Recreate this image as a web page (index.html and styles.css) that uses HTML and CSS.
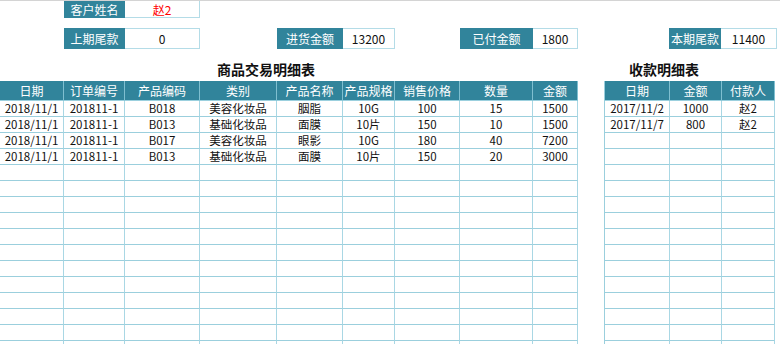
FILE: index.html
```html
<!DOCTYPE html>
<html lang="zh">
<head>
<meta charset="utf-8">
<title>商品交易明细</title>
<link rel="stylesheet" href="styles.css">
</head>
<body>
<div class="sheet">
  <div class="fields fields-1">
    <div class="sp w64"></div>
    <div class="lbl w61">客户姓名</div>
    <div class="val w75 red">赵2</div>
  </div>
  <div class="fields fields-2">
    <div class="sp w64"></div>
    <div class="lbl w61">上期尾款</div>
    <div class="val w75">0</div>
    <div class="sp w77"></div>
    <div class="lbl w66">进货金额</div>
    <div class="val w52">13200</div>
    <div class="sp w65"></div>
    <div class="lbl w73">已付金额</div>
    <div class="val w45">1800</div>
    <div class="sp w91"></div>
    <div class="lbl w52">本期尾款</div>
    <div class="val w56">11400</div>
  </div>
  <div class="tables">
    <section class="block block-main">
      <h2 class="title title-main">商品交易明细表</h2>
      <table class="grid grid-main">
        <colgroup>
          <col style="width:64px"><col style="width:61px"><col style="width:75px"><col style="width:77px"><col style="width:66px"><col style="width:52px"><col style="width:65px"><col style="width:73px"><col style="width:45px">
        </colgroup>
        <thead>
          <tr><th>日期</th><th>订单编号</th><th>产品编码</th><th>类别</th><th>产品名称</th><th>产品规格</th><th>销售价格</th><th>数量</th><th>金额</th></tr>
        </thead>
        <tbody>
          <tr><td>2018/11/1</td><td>201811-1</td><td>B018</td><td>美容化妆品</td><td>胭脂</td><td>10G</td><td>100</td><td>15</td><td>1500</td></tr>
          <tr><td>2018/11/1</td><td>201811-1</td><td>B013</td><td>基础化妆品</td><td>面膜</td><td>10片</td><td>150</td><td>10</td><td>1500</td></tr>
          <tr><td>2018/11/1</td><td>201811-1</td><td>B017</td><td>美容化妆品</td><td>眼影</td><td>10G</td><td>180</td><td>40</td><td>7200</td></tr>
          <tr><td>2018/11/1</td><td>201811-1</td><td>B013</td><td>基础化妆品</td><td>面膜</td><td>10片</td><td>150</td><td>20</td><td>3000</td></tr>
          <tr><td></td><td></td><td></td><td></td><td></td><td></td><td></td><td></td><td></td></tr>
          <tr><td></td><td></td><td></td><td></td><td></td><td></td><td></td><td></td><td></td></tr>
          <tr><td></td><td></td><td></td><td></td><td></td><td></td><td></td><td></td><td></td></tr>
          <tr><td></td><td></td><td></td><td></td><td></td><td></td><td></td><td></td><td></td></tr>
          <tr><td></td><td></td><td></td><td></td><td></td><td></td><td></td><td></td><td></td></tr>
          <tr><td></td><td></td><td></td><td></td><td></td><td></td><td></td><td></td><td></td></tr>
          <tr><td></td><td></td><td></td><td></td><td></td><td></td><td></td><td></td><td></td></tr>
          <tr><td></td><td></td><td></td><td></td><td></td><td></td><td></td><td></td><td></td></tr>
          <tr><td></td><td></td><td></td><td></td><td></td><td></td><td></td><td></td><td></td></tr>
          <tr><td></td><td></td><td></td><td></td><td></td><td></td><td></td><td></td><td></td></tr>
          <tr><td></td><td></td><td></td><td></td><td></td><td></td><td></td><td></td><td></td></tr>
          <tr><td></td><td></td><td></td><td></td><td></td><td></td><td></td><td></td><td></td></tr>
        </tbody>
      </table>
    </section>
    <section class="block block-pay">
      <h2 class="title title-pay">收款明细表</h2>
      <table class="grid grid-pay">
        <colgroup>
          <col style="width:66px"><col style="width:52px"><col style="width:53px">
        </colgroup>
        <thead>
          <tr><th>日期</th><th>金额</th><th>付款人</th></tr>
        </thead>
        <tbody>
          <tr><td>2017/11/2</td><td>1000</td><td>赵2</td></tr>
          <tr><td>2017/11/7</td><td>800</td><td>赵2</td></tr>
          <tr><td></td><td></td><td></td></tr>
          <tr><td></td><td></td><td></td></tr>
          <tr><td></td><td></td><td></td></tr>
          <tr><td></td><td></td><td></td></tr>
          <tr><td></td><td></td><td></td></tr>
          <tr><td></td><td></td><td></td></tr>
          <tr><td></td><td></td><td></td></tr>
          <tr><td></td><td></td><td></td></tr>
          <tr><td></td><td></td><td></td></tr>
          <tr><td></td><td></td><td></td></tr>
          <tr><td></td><td></td><td></td></tr>
          <tr><td></td><td></td><td></td></tr>
          <tr><td></td><td></td><td></td></tr>
          <tr><td></td><td></td><td></td></tr>
        </tbody>
      </table>
    </section>
  </div>
</div>
</body>
</html>
```

FILE: styles.css
```css
html, body {
  margin: 0;
  padding: 0;
  background: #ffffff;
}
body {
  font-family: "Noto Sans CJK SC", "Noto Sans", sans-serif;
  font-size: 12px;
  color: #111111;
  overflow: hidden;
}
.sheet {
  border-top: 1px solid #d4d4d4;
  width: 780px;
}
.fields {
  display: flex;
}
.fields-1 {
  height: 17px;
}
.fields-2 {
  margin-top: 10px;
  height: 21px;
}
.sp, .lbl, .val {
  flex: none;
  box-sizing: border-box;
  height: 100%;
}
.lbl {
  background: #31849b;
  color: #ffffff;
  text-align: center;
  display: flex;
  align-items: center;
  justify-content: center;
  white-space: nowrap;
}
.val {
  background: #ffffff;
  border: 1px solid #b4dce7;
  border-left: none;
  display: flex;
  align-items: center;
  justify-content: center;
}
.fields-1 .val {
  border-top: none;
}
.red {
  color: #ff0000;
}
.w45 { width: 45px; }
.w52 { width: 52px; }
.w56 { width: 56px; }
.w61 { width: 61px; }
.w64 { width: 64px; }
.w65 { width: 65px; }
.w66 { width: 66px; }
.w73 { width: 73px; }
.w75 { width: 75px; }
.w77 { width: 77px; }
.w91 { width: 91px; }

.tables {
  display: flex;
  gap: 26px;
}
.block {
  flex: none;
}
.title {
  margin: 0;
  height: 32px;
  box-sizing: border-box;
  padding-top: 10px;
  line-height: 20px;
  font-size: 14px;
  font-weight: bold;
  color: #111;
}
.title-main {
  padding-left: 217px;
}
.title-pay {
  padding-left: 25px;
}
.grid {
  border-collapse: separate;
  border-spacing: 0;
  table-layout: fixed;
}
.grid-main {
  width: 578px;
}
.grid-pay {
  width: 171px;
}
.grid th, .grid td {
  padding: 0;
  text-align: center;
  white-space: nowrap;
  overflow: hidden;
  box-sizing: border-box;
}
.grid th {
  background: #31849b;
  color: #ffffff;
  font-weight: normal;
  font-size: 12px;
  height: 20px;
  line-height: 19px;
  border-right: 1px solid #7fbfd0;
  border-bottom: 1px solid #9bd0de;
}
.grid td {
  font-size: 11.5px;
  height: 16px;
  line-height: 15px;
  border-right: 1px solid #a9d7e4;
  border-bottom: 1px solid #9bcfdd;
}
.grid-pay th:first-child, .grid-pay td:first-child {
  border-left: 1px solid #9bcfdd;
}
```
